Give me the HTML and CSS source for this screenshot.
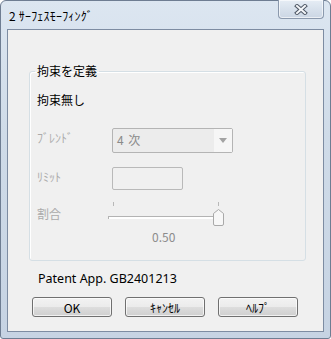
FILE: index.html
```html
<!DOCTYPE html>
<html lang="ja">
<head>
    <meta charset="UTF-8">
    <title>サーフェスモーフィング</title>
    <link rel="stylesheet" href="styles.css">
</head>
<body>
    <div class="window">
        <div class="titlebar">
            <span class="title">2 ｻｰﾌｪｽﾓｰﾌｨﾝｸﾞ</span>
            <div class="close">
                <svg width="14" height="11" viewBox="0 0 14 11">
                    <path d="M3 2 L11 9 M11 2 L3 9" stroke="#4f5866" stroke-width="4" stroke-linecap="square"/>
                    <path d="M3 2 L11 9 M11 2 L3 9" stroke="#f4f6f9" stroke-width="2" stroke-linecap="square"/>
                </svg>
            </div>
        </div>

        <div class="client">
            <fieldset class="group">
                <legend>拘束を定義</legend>
                <div class="status">拘束無し</div>

                <div class="row row-blend">
                    <span class="label">ﾌﾞﾚﾝﾄﾞ</span>
                    <div class="combo">
                        <span class="combo-text">4 次</span>
                        <span class="combo-arrow">
                            <svg width="8" height="5" viewBox="0 0 8 5"><path d="M0 0 H8 L4 5 Z" fill="#a3a3a3"/></svg>
                        </span>
                    </div>
                </div>

                <div class="row row-limit">
                    <span class="label">ﾘﾐｯﾄ</span>
                    <div class="edit"></div>
                </div>

                <div class="row row-ratio">
                    <span class="label">割合</span>
                    <div class="slider">
                        <div class="ticks"><span></span><span></span></div>
                        <div class="track"></div>
                        <svg class="thumb" width="11" height="17" viewBox="0 0 11 17">
                            <path d="M0.5 4.5 L5.5 0.5 L10.5 4.5 V15 Q10.5 16.5 9 16.5 H2 Q0.5 16.5 0.5 15 Z" fill="#f7f7f7" stroke="#a9a9a9"/>
                        </svg>
                    </div>
                </div>

                <div class="value">0.50</div>
            </fieldset>

            <p class="patent">Patent App. GB2401213</p>

            <div class="buttons">
                <button class="btn">OK</button>
                <button class="btn">ｷｬﾝｾﾙ</button>
                <button class="btn">ﾍﾙﾌﾟ</button>
            </div>
        </div>
    </div>
</body>
</html>
```

FILE: styles.css
```css
* {
    margin: 0;
    padding: 0;
    box-sizing: border-box;
}

body {
    font-family: "Noto Sans CJK JP", "Noto Sans", sans-serif;
    font-size: 12px;
    background-color: #ffffff;
    color: #000000;
}

.window {
    width: 331px;
    height: 339px;
    display: flex;
    flex-direction: column;
    padding: 0 6px 6px;
    border: 1px solid #6e7d92;
    border-radius: 6px 6px 3px 3px;
    background: linear-gradient(180deg, #dce6f1 0%, #cfdbe8 40%, #c6d3e3 100%);
}

.titlebar {
    height: 28px;
    display: flex;
    justify-content: space-between;
    align-items: center;
    padding-left: 2px;
}

.title {
    font-size: 12px;
    line-height: 16px;
    letter-spacing: 0.2px;
    color: #000000;
    margin-top: 1px;
}

.close {
    align-self: flex-start;
    width: 46px;
    height: 19px;
    margin-top: -1px;
    display: flex;
    align-items: center;
    justify-content: center;
    border: 1px solid #8b99ad;
    border-top: none;
    border-radius: 0 0 4px 4px;
    background: linear-gradient(180deg, #e6edf5 0%, #d8e1ec 50%, #cbd6e4 100%);
    box-shadow: inset 0 0 0 1px rgba(255, 255, 255, 0.6);
}

.client {
    flex: 1;
    border: 1px solid #7d8ca2;
    background-color: #f0f0f0;
}

.group {
    margin: 33px 17px 0 21px;
    padding: 0 8px 15px 7px;
    border: 1px solid #d5dfe5;
    border-radius: 3px;
    box-shadow: inset 1px 1px 0 #ffffff;
}

.group legend {
    padding: 0 2px;
    margin-left: -2px;
    font-size: 12px;
    line-height: 16px;
}

.status {
    margin-top: 13px;
    line-height: 16px;
}

.row {
    display: flex;
    align-items: flex-start;
}

.label {
    width: 75px;
    line-height: 20px;
    color: #ababab;
}

.row-blend {
    margin-top: 20px;
}

.combo {
    width: 121px;
    height: 25px;
    display: flex;
    border: 1px solid #b4b4b4;
    border-radius: 2px;
    background-color: #ececec;
}

.combo-text {
    flex: 1;
    padding-left: 4px;
    line-height: 22px;
    word-spacing: 2px;
    color: #8a8a8a;
}

.combo-arrow {
    width: 18px;
    display: flex;
    align-items: center;
    justify-content: center;
    background-color: #f6f6f6;
}

.row-limit {
    margin-top: 14px;
}

.edit {
    width: 71px;
    height: 23px;
    border: 1px solid #b9b9b9;
    border-radius: 2px;
    background-color: #f0f0f0;
}

.row-ratio {
    margin-top: 11px;
    align-items: center;
}

.slider {
    position: relative;
    width: 116px;
    height: 26px;
    margin-left: -4px;
}

.ticks {
    display: flex;
    justify-content: space-between;
    padding: 1px 5px 0;
}

.ticks span {
    width: 1px;
    height: 4px;
    background-color: #b8b8b8;
}

.track {
    margin-top: 10px;
    height: 3px;
    border-top: 1px solid #b3b3b3;
    border-left: 1px solid #b3b3b3;
    background-color: #ffffff;
    width: 111px;
}

.thumb {
    position: absolute;
    right: 0;
    top: 8px;
}

.value {
    margin-top: 2px;
    padding-left: 115px;
    line-height: 16px;
    color: #8c8c8c;
    font-size: 12px;
}

.patent {
    margin: 10px 0 0 30px;
    line-height: 16px;
    font-size: 12.5px;
    font-family: "Noto Sans", sans-serif;
}

.buttons {
    display: flex;
    gap: 13px;
    margin: 10px 0 0 24px;
}

.btn {
    width: 80px;
    height: 20px;
    border: 1px solid #707070;
    border-radius: 3px;
    font-family: "Noto Sans CJK JP", "Noto Sans", sans-serif;
    font-size: 12px;
    color: #000000;
    background: linear-gradient(180deg, #f2f2f2 0%, #ebebeb 50%, #dddddd 51%, #cfcfcf 100%);
    box-shadow: inset 0 0 0 1px rgba(255, 255, 255, 0.7);
}
```
